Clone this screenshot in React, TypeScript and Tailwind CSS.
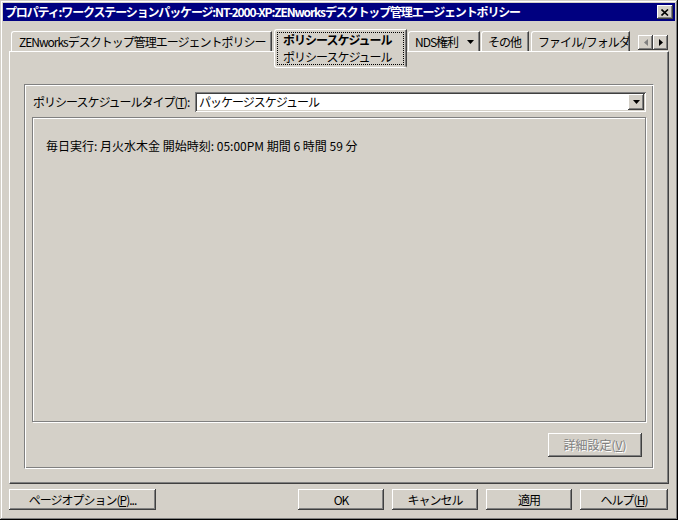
import React from 'react';

const raised =
  'bg-[#d4d0c8] shadow-[inset_-1px_-1px_#404040,inset_1px_1px_#ffffff,inset_-2px_-2px_#808080]';
const sunken =
  'shadow-[inset_1px_1px_#808080,inset_-1px_-1px_#ffffff,inset_2px_2px_#404040,inset_-2px_-2px_#d4d0c8]';

function DownArrow({ color = '#000000' }: { color?: string }) {
  return (
    <svg width="7" height="4" viewBox="0 0 7 4">
      <polygon points="0,0 7,0 3.5,4" fill={color} />
    </svg>
  );
}

function Tab({ label, width, ml, children }: { label?: string; width: number; ml: number; children?: React.ReactNode }) {
  return (
    <div
      className="mt-[2px] h-[20px] flex items-center border-t border-l border-white rounded-tl-[3px] border-r border-r-[#404040] shadow-[inset_-1px_0_#808080] overflow-hidden whitespace-nowrap"
      style={{ width, marginLeft: ml }}
    >
      {children ?? <span className="px-[6px]">{label}</span>}
    </div>
  );
}

function PushButton({ children, className = '' }: { children: React.ReactNode; className?: string }) {
  return (
    <button className={`${raised} h-[21px] flex items-center justify-center text-[12px] text-black ${className}`}>
      {children}
    </button>
  );
}

export default function App() {
  return (
    <div className="w-[678px] h-[520px] bg-[#d4d0c8] flex flex-col p-[3px] shadow-[inset_-1px_-1px_#000000,inset_1px_1px_#d4d0c8,inset_-2px_-2px_#808080,inset_2px_2px_#ffffff] font-['Noto_Sans_CJK_JP','Noto_Sans',sans-serif] text-[12px] leading-[14px] text-black">
      {/* title bar */}
      <div className="h-[18px] bg-[#000080] flex items-center justify-between pl-[2px] pr-[2px]">
        <span className="text-white font-bold text-[12px] tracking-[-1.15px] whitespace-nowrap">
          プロパティ:ワークステーションパッケージ:NT-2000-XP:ZENworksデスクトップ管理エージェントポリシー
        </span>
        <div className={`${raised} w-[16px] h-[14px] flex items-center justify-center`}>
          <svg width="8" height="7" viewBox="0 0 8 7">
            <path d="M0.5 0.5 L7 6.5 M7 0.5 L0.5 6.5" stroke="#000" strokeWidth="1.6" />
          </svg>
        </div>
      </div>

      <div className="flex-1 flex flex-col px-[6px] pt-[8px] pb-[7px]">
        {/* tabs */}
        <div className="h-[22px] flex items-start relative z-10 tracking-[-1px]">
          <Tab width={261} ml={2}>
            <span className="pl-[7px] pt-[1px]">ZENworksデスクトップ管理エージェントポリシー</span>
          </Tab>
          <div className="ml-[2px] w-[133px] h-[39px] bg-[#d4d0c8] border-t border-l border-white border-r border-r-[#404040] border-b border-b-white rounded-tl-[3px] rounded-b-[3px] shadow-[inset_-1px_0_#808080] p-[2px]">
            <div className="h-full border border-dotted border-black flex flex-col justify-center pl-[5px] gap-[3px]">
              <span className="font-bold">ポリシースケジュール</span>
              <span>ポリシースケジュール</span>
            </div>
          </div>
          <Tab width={72} ml={1}>
            <span className="pl-[6px] flex items-center gap-[9px]">
              NDS権利
              <DownArrow />
            </span>
          </Tab>
          <Tab width={48} ml={1} label="その他" />
          <Tab width={99} ml={2} label="ファイル/フォルダ" />
          <div className="ml-[8px] mt-[6px] flex">
            <div className={`${raised} w-[15px] h-[15px] flex items-center justify-center`}>
              <svg width="4" height="7" viewBox="0 0 4 7">
                <polygon points="4,0 4,7 0,3.5" fill="#808080" />
              </svg>
            </div>
            <div className={`${raised} w-[15px] h-[15px] flex items-center justify-center`}>
              <svg width="4" height="7" viewBox="0 0 4 7">
                <polygon points="0,0 0,7 4,3.5" fill="#000" />
              </svg>
            </div>
          </div>
        </div>

        {/* tab panel */}
        <div className="flex-1 flex flex-col border-t border-l border-white border-r border-b border-r-[#404040] border-b-[#404040] shadow-[inset_-1px_-1px_#808080] pt-[32px] px-[14px] pb-[14px]">
          <div className="flex-1 flex flex-col border-t border-l border-[#808080] border-r border-b border-r-white border-b-white shadow-[inset_1px_1px_#ffffff,inset_-1px_-1px_#808080] pt-[7px] px-[7px] pb-[11px]">
            <div className="flex items-center h-[20px] pl-[1px]">
              <span className="tracking-[-1px] whitespace-nowrap">
                ポリシースケジュールタイプ(<span className="underline">T</span>):
              </span>
              <div className={`${sunken} ml-auto w-[451px] h-[20px] bg-white flex items-center pl-[4px] pr-[2px]`}>
                <span className="tracking-[-1px]">パッケージスケジュール</span>
                <div className={`${raised} ml-auto w-[16px] h-[16px] flex items-center justify-center`}>
                  <DownArrow />
                </div>
              </div>
            </div>

            <div className="mt-[5px] flex-1 border border-[#808080] shadow-[inset_1px_1px_#ffffff,1px_1px_#ffffff] pt-[21px] pl-[13px]">
              <span className="whitespace-nowrap">毎日実行: 月火水木金 開始時刻: 05:00PM 期間 6 時間 59 分</span>
            </div>

            <div className="mt-[11px] flex justify-end pr-[4px]">
              <PushButton className="w-[94px] h-[24px]">
                <span className="text-[#808080] [text-shadow:1px_1px_#ffffff]">
                  詳細設定(<span className="underline">V</span>)
                </span>
              </PushButton>
            </div>
          </div>
        </div>

        {/* bottom buttons */}
        <div className="mt-[5px] flex items-center tracking-[-1px]">
          <PushButton className="w-[147px]">
            ページオプション(<span className="underline">P</span>)...
          </PushButton>
          <div className="ml-auto flex gap-[8px] pr-[1px]">
            <PushButton className="w-[86px]">OK</PushButton>
            <PushButton className="w-[86px]">キャンセル</PushButton>
            <PushButton className="w-[86px]">適用</PushButton>
            <PushButton className="w-[88px]">
              ヘルプ(<span className="underline">H</span>)
            </PushButton>
          </div>
        </div>
      </div>
    </div>
  );
}
